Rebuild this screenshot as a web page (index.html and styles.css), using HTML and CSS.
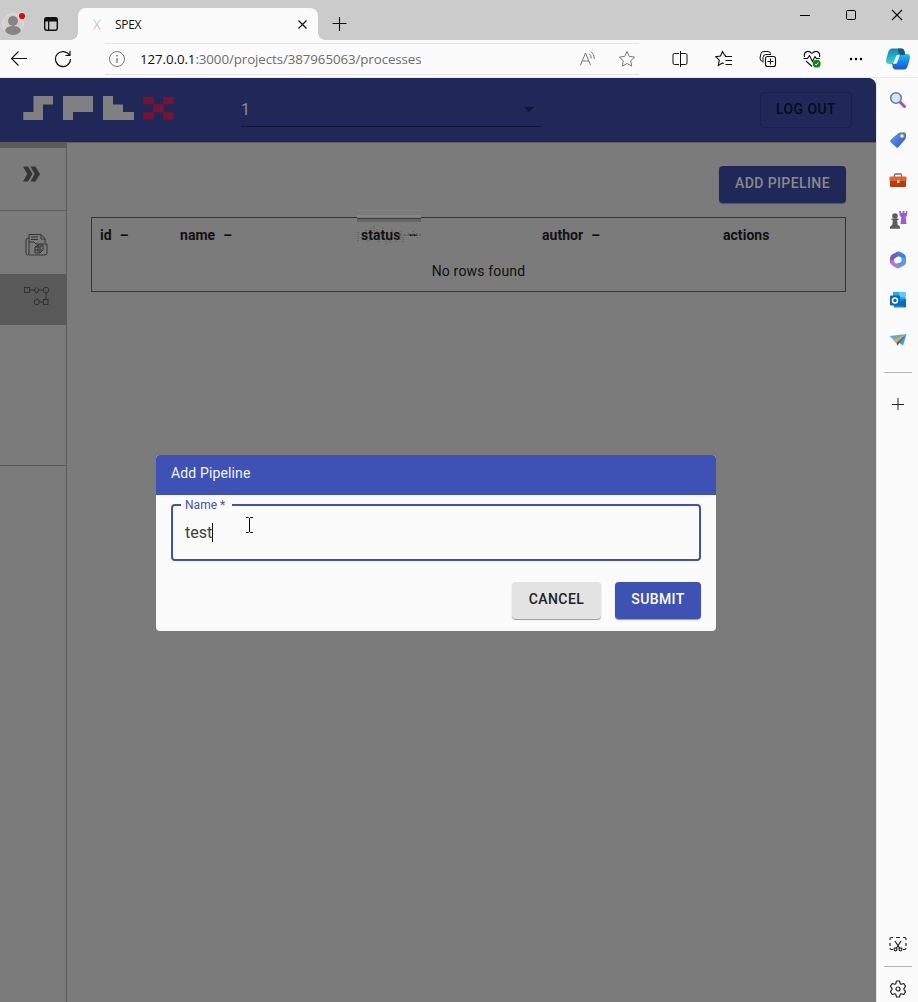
FILE: index.html
```html
<!DOCTYPE html>
<html lang="en">
<head>
<meta charset="utf-8">
<title>SPEX</title>
<link rel="stylesheet" href="styles.css">
</head>
<body>
<div class="window">
  <div class="tabstrip">
    <svg class="avatar" width="26" height="26" viewBox="0 0 26 26"><circle cx="12" cy="15" r="10.5" fill="#d3d0cc" stroke="#e8e4de" stroke-width=".8"/><circle cx="12" cy="12" r="5" fill="#858585"/><path d="M4 22q1-5 8-5t8 5q-3 4-8 4t-8-4z" fill="#858585"/><circle cx="21" cy="7" r="4" fill="#ddd"/><circle cx="21" cy="7" r="3.1" fill="#e60505"/></svg>
    <svg class="workspaces" width="16" height="16" viewBox="0 0 16 16"><rect x="1.7" y="1.7" width="12.6" height="12.6" rx="2.2" fill="none" stroke="#111" stroke-width="1.4"/><path d="M1.5 5.5V3.5q0-2 2-2h9q2 0 2 2v2zM5 5h1.3v9H5z" fill="#111"/></svg>
    <div class="tab">
      <svg class="favicon" width="8" height="11" viewBox="0 0 8 11"><path d="M.7.5 4 5.5 7.3.5" fill="none" stroke="#b9d3df" stroke-width="1.1"/><path d="M.7 10.5 4 5.5l3.3 5" fill="none" stroke="#efb7ad" stroke-width="1.1"/></svg>
      <span class="tab-title">SPEX</span>
      <svg width="9" height="9" viewBox="0 0 9 9"><path d="m.5.5 8 8m0-8-8 8" stroke="#111" stroke-width="1.2"/></svg>
    </div>
    <svg class="newtab" width="15" height="15" viewBox="0 0 15 15"><path d="M.5 7.5h14M7.500 1v14" stroke="#111" stroke-width="1.1"/></svg>
    <div class="controls">
      <svg width="12" height="12" viewBox="0 0 12 12"><path d="M1 6.5h10" stroke="#000"/></svg>
      <svg width="12" height="12" viewBox="0 0 12 12"><rect x="1.5" y="1.5" width="9" height="9" rx="1.3" fill="none" stroke="#000"/></svg>
      <svg width="12" height="12" viewBox="0 0 12 12"><path d="m1 1 10 10m0-10L1 11" stroke="#000" stroke-width="1.1"/></svg>
    </div>
  </div>

  <div class="toolbar">
    <div class="tool back"><svg width="18" height="16" viewBox="0 0 18 16"><path d="M17 7.500H1.500M8.500.500l-7 7 7 7" fill="none" stroke="#111" stroke-width="1.1"/></svg></div>
    <div class="tool refresh"><svg width="18" height="18" viewBox="0 0 18 18"><path d="M15.5 5.3A7.5 7.5 0 1 0 16.5 9M16 1v4.5h-4.6" fill="none" stroke="#111" stroke-width="1.2"/></svg></div>
    <div class="address">
      <svg width="24" height="18" viewBox="0 0 24 18"><circle cx="12" cy="9" r="7.5" fill="none" stroke="#777"/><path d="M12 8v5M12 5v1.4" stroke="#777" stroke-width="1.3"/></svg>
      <span class="url"><b>127.0.0.1</b>:3000/projects/387965063/processes</span>
      <svg class="read" width="24" height="20" viewBox="0 0 24 20"><path d="M4.500 16 9.500 4l5 12M6.200 12h6.600M13 4.500q2.500 1.800 2.200 5M14.800 2.500q4 2.800 3.500 7.500" fill="none" stroke="#777"/></svg>
      <svg class="star" width="24" height="20" viewBox="0 0 24 20"><path d="m12 2.500 2.300 4.900 5.300.7-3.900 3.700 1 5.300-4.700-2.600-4.700 2.600 1-5.300-3.900-3.700 5.300-.7z" fill="none" stroke="#777" stroke-linejoin="round"/></svg>
    </div>
    <div class="tools">
      <div class="tool"><svg width="16" height="16" viewBox="0 0 16 16"><path d="M7 2.500H2.500q-1.500 0-1.500 1.500v8q0 1.500 1.500 1.500H7M9 2.500h4.500q1.500 0 1.500 1.500v8q0 1.500-1.500 1.500H9M8.500 0v16" fill="none" stroke="#111"/></svg></div>
      <div class="tool"><svg width="18" height="18" viewBox="0 0 18 18"><path d="M11 5.500 9.500 5 7.500 1.500 5.500 6l-4.800.7 3.600 3.500-1 5.200L7.500 13l1.200.7M10 6.500h7M10.500 10.500H17M10.500 14.500H17" fill="none" stroke="#111" stroke-width="1.100"/></svg></div>
      <div class="tool"><svg width="18" height="18" viewBox="0 0 18 18"><path d="M3.500 11.500Q1 11 1 8L2 3.500Q2.500 1.500 5 1.500h4q2 0 2.700 2M4 12.500V7.500q0-3 3-3h5" fill="none" stroke="#111"/><rect x="6.500" y="6.500" width="10" height="10" rx="2" fill="#fbfbfb" stroke="#111" stroke-width="1.100"/><path d="M8.500 11.500h6M11.500 8.500v6" stroke="#111" stroke-width="1.100"/></svg></div>
      <div class="tool"><svg width="18" height="18" viewBox="0 0 18 18"><path d="M1.500 7Q.5 2.500 4 1.500q2.700-.5 5 2 2.300-2.500 5-2 3.500 1 2.500 5.500M.5 8.500h4l2-3 3 6 2.500-5 1.300 2h3.500M3 11l6 5.500" fill="none" stroke="#111" stroke-width="1.100"/><circle cx="13.700" cy="13.700" r="3.900" fill="#118316"/><path d="m12 14 1.200 1 2.300-2.500" fill="none" stroke="#fff" stroke-width=".9"/></svg></div>
      <div class="tool"><svg width="14" height="4" viewBox="0 0 14 4"><circle cx="2" cy="2" r="1.250"/><circle cx="7" cy="2" r="1.250"/><circle cx="12" cy="2" r="1.250"/></svg></div>
      <div class="tool"><svg width="24" height="24" viewBox="0 0 24 24"><defs><linearGradient id="ca" x1="0" y1="0" x2="0" y2="1"><stop stop-color="#1a83b0"/><stop offset=".5" stop-color="#1badd0"/><stop offset="1" stop-color="#55d69b"/></linearGradient><linearGradient id="cb" x1="0" y1="1" x2="0" y2="0"><stop stop-color="#1b51d9"/><stop offset=".5" stop-color="#1b84e7"/><stop offset="1" stop-color="#1cc4f4"/></linearGradient></defs><path d="M6 1.500h9q3 0 3.500 3L19 8h-4q-2 0-2.600 2l-1.600 5q-.8 2-2.800 2H3q-3 0-3-3 .3-3 2-8 1.200-4.500 4-4.500z" fill="url(#ca)"/><path d="M18 22.500H10q-3 0-3.500-3L6 16h3q2 0 2.700-2l1.500-5q.8-2 2.800-2h5q3 0 3 3-.3 3-2 8-1.200 4.500-4 4.500z" fill="url(#cb)"/><path d="M12 1.500h3q3 0 3.500 3L19 8h-4l-2 .8z" fill="#165b83"/><path d="m14 7.200-3.300 9.300-3.700.500 3.300-8.500z" fill="#e9fbff"/></svg></div>
    </div>
  </div>

  <div class="body">
    <div class="page">
      <header class="appbar">
        <svg class="logo" width="152" height="24" viewBox="0 0 152 24"><g fill="#808080"><path d="M10.500 0H30v8.500H20V24H.3v-8h10.200zM40 0h30v16H50v8H40zM80 0h10v8.500h10V16h11v8H80z"/></g><path d="M120.300.7h10.400v7.500h9.600V.7h10.400v7.500h-10v8h10v7.300h-10.400v-7.300h-9.600v7.300h-10.400v-7.300h10v-8h-10z" fill="#7b1232"/></svg>
        <div class="select"><span>1</span><svg width="10" height="5" viewBox="0 0 10 5"><path d="M0 0h10L5 5z" fill="#10163a"/></svg></div>
        <button class="btn logout">LOG OUT</button>
      </header>
      <div class="columns">
        <nav class="nav">
          <div class="nav-item toggle"><svg width="19" height="16" viewBox="0 0 19 16"><path d="M1 .500h5l4.500 7.500L6 15.500H1L5.200 8zM8.500.500h5L18 8l-4.500 7.500h-5L12.700 8z" fill="#353535"/></svg></div>
          <div class="nav-item files"><svg width="24" height="24" viewBox="0 0 24 24" fill="none" stroke="#353535"><path d="M4 9V1.500h12l4 4V10M16 1.500V6h4M6 4h7M6 6.500h7M4 9h5l2 2h11v9q0 2-2 2H4M4 9v11q0 2-1.500 2T1 20V7q0-2 3-2"/><path d="m10 14 3-2h5v5l-3 3h-5zM10 14h5v6m0-6 3-2M10 17h7M13 12v8"/></svg></div>
          <div class="nav-item flow"><svg width="26" height="20" viewBox="0 0 26 20" fill="none" stroke="#303030"><rect x=".5" y="1.500" width="5" height="5"/><path d="M6 4h5M11.500 1.500q-2 2.500 0 5h2q2-2.500 0-5M15 4h4M22 7v6"/><circle cx="22" cy="4" r="2.800"/><circle cx="12.700" cy="16" r="2.700"/><rect x="19.500" y="13.500" width="4.500" height="5"/><path d="M15.500 16h4"/></svg></div>
          <div class="nav-rest"></div>
        </nav>
        <main class="main">
          <button class="btn add">ADD PIPELINE</button>
          <div class="table">
            <div class="thead">
              <span>id<i>–</i></span><span>name<i>–</i></span><span class="status">status<i>–</i><svg class="speckle" width="66" height="20" viewBox="0 0 66 20"><path d="M1 7v9M9 5v2M11 13v4M14 3v3M17 1v5M20 4v3M22 14v4M26 3v3M29 14v5M33 15v3M35 4v3M39 14v4M43 6v10M46 12v5M52 8v3M56 6v6M60 8v5" stroke="#555648" stroke-dasharray="1 1"/><path d="M42 10h22" stroke="#5d5346" stroke-dasharray="3 1"/></svg></span><span>author<i>–</i></span><span>actions</span>
            </div>
            <div class="empty">No rows found</div>
          </div>
        </main>
      </div>
      <section class="dialog">
        <h2>Add Pipeline</h2>
        <div class="dialog-body">
          <fieldset class="field">
            <legend>Name *</legend>
            <span class="value">test</span>
          </fieldset>
          <div class="actions"><button class="btn cancel">CANCEL</button><button class="btn submit">SUBMIT</button></div>
        </div>
      </section>
      <svg class="cursor" width="9" height="16" viewBox="0 0 9 16"><path d="M1 .5h2.500l1 1 1-1H8M4.500 1v14M1 15.500h2.500l1-1 1 1H8" fill="none" stroke="#000"/></svg>
    </div>

    <aside class="sidebar">
      <div class="slot"><svg width="18" height="18" viewBox="0 0 18 18"><path d="m11 11 4.500 4.500" stroke="#a64bd8" stroke-width="3" stroke-linecap="round"/><circle cx="7" cy="7" r="5.300" fill="#c9e9fb" stroke="#747b83" stroke-width="1.600"/></svg></div>
      <div class="slot"><svg width="18" height="18" viewBox="0 0 18 18"><defs><linearGradient id="tg" x1="0" y1="0" x2="1" y2="1"><stop stop-color="#5ba5f6"/><stop offset="1" stop-color="#2f50d3"/></linearGradient></defs><path d="m1.500 9 8-7q1-.7 5.500-.7 2 0 2 2 0 4-.7 5l-7 8q-1 1-2 0L1.500 11q-1-1 0-2z" fill="url(#tg)"/><circle cx="13" cy="5" r="1.700" fill="#fff2bd" stroke="#e0b33a"/></svg></div>
      <div class="slot toolbox"><svg width="18" height="18" viewBox="0 0 18 18"><path d="M5.500 5V3q0-1 1-1h5q1 0 1 1v2" fill="none" stroke="#6f6f72" stroke-width="1.300"/><path d="M1.500 4.500h15q1 0 1 1V9H.5V5.500q0-1 1-1z" fill="#df642d"/><path d="M1 9h16v5q0 1-1 1H2q-1 0-1-1z" fill="#b83b12"/><rect x="8" y="8" width="2.500" height="3" fill="#f2c49c"/></svg></div>
      <div class="slot"><svg width="20" height="20" viewBox="0 0 20 20"><path d="M11 1h2v2h1.500V1h2v2H18V1h1.500l-.8 5-1 1 .8 7h-6l.8-7-1.500-1z" fill="#a356dc"/><circle cx="7" cy="6" r="2.800" fill="#5c5c5e"/><path d="M3.500 8.500h7v1.800H9l.8 4.700 2.200 1.500v2.300H2v-2.300L4.200 15l.8-4.700H3.500z" fill="#5c5c5e"/></svg></div>
      <div class="slot"><svg width="18" height="18" viewBox="0 0 18 18"><path d="M9 .5 3 3.500Q1 5 1 7v5l4 1V8l8-5z" fill="#7756c5"/><path d="M9 .5q2-.5 6 2.500 2 1.500 2 4v3l-4 1V7L7.500 4z" fill="#3d83dc"/><path d="M17 7v4q0 2-2 3.500l-6 3-5-3 8.500-4V6z" fill="#569ae2"/><path d="M1 10q0 3 3 5l5 2.500 3-3-6-2.500-2-4z" fill="#ad79d8"/><circle cx="9" cy="9" r="3" fill="#fff"/></svg></div>
      <div class="slot"><svg width="18" height="18" viewBox="0 0 18 18"><path d="M4 1h12.500v8H4z" fill="#29a8ea"/><path d="M10 1h6.500v5H10z" fill="#55cdf5"/><path d="M4 8h13v7q0 1.500-1.500 1.500H5z" fill="#1587d9"/><path d="m17 8-8 5 7 3.500q1 0 1-1.500z" fill="#1269b1"/><rect x="1" y="4.500" width="10" height="10" rx="1" fill="#0867b9"/><circle cx="6" cy="9.500" r="2.500" fill="none" stroke="#fff" stroke-width="1.500"/></svg></div>
      <div class="slot"><svg width="18" height="18" viewBox="0 0 18 18"><path d="m.5 5 17-2L6.500 10.500z" fill="#48b2ef"/><path d="M17.500 3 14 14.500 9 11z" fill="#35a0e8"/><path d="M4 9 17.500 3 7.500 12.500z" fill="#f3a329"/><path d="M7.500 12 17.500 3 9.500 13l-1 2z" fill="#1a67b0"/></svg></div>
      <hr class="rule">
      <svg class="plus" width="12" height="12" viewBox="0 0 12 12"><path d="M0 6.500h12M6 0v12" stroke="#222"/></svg>
      <div class="spacer"></div>
      <svg width="18" height="16" viewBox="0 0 18 16" fill="none" stroke="#222" stroke-width="1.200"><path d="M1 4V3q0-1.500 1.500-1.500H4M7 1.500h4M14 1.500h1.500Q17 1.500 17 3v1M17 7v3M1 7v3M1 12q0 1.500 1.500 1.500H4M17 12q0 1.500-1.500 1.500H14M6 5l4.500 7M12 5l-4.500 7"/><circle cx="6.500" cy="13.300" r="1.500"/><circle cx="11.500" cy="13.300" r="1.500"/></svg>
      <hr class="rule low">
      <svg class="gear" width="18" height="18" viewBox="0 0 18 18" fill="none" stroke="#222" stroke-width="1.200"><path d="M7.500 1h3l.700 2.700 1 .600 2.600-.800 1.700 2.800L14.700 9l1.800 2.700-1.700 2.800-2.600-.800-1 .600-.700 2.700h-3l-.700-2.700-1-.600-2.600.800-1.700-2.800L3.300 9 1.500 6.300l1.700-2.800 2.600.800 1-.600z" stroke-linejoin="round"/><circle cx="9" cy="9" r="2"/></svg>
    </aside>
  </div>
</div>
</body>
</html>
```
FILE: styles.css
```css
* { box-sizing: border-box; }
body { margin: 0; font-family: Roboto, "Liberation Sans", sans-serif; background: #fbfbfb; }
svg { display: block; flex: none; }
button { border: 0; font-family: inherit; }
.window { width: 918px; height: 1002px; display: flex; flex-direction: column; overflow: hidden; }

.tabstrip { height: 40px; flex: none; display: flex; background: #cbcbcb; align-items: flex-start; }
.avatar { margin: 9px 0 0 1px; }
.workspaces { margin: 16px 0 0 16px; }
.tab { position: relative; width: 240px; height: 32px; margin: 8px 0 0 19px; padding: 0 11px 0 15px; display: flex; align-items: center; background: #fbfbfb; border-radius: 8px 8px 0 0; }
.tab::before, .tab::after { content: ""; position: absolute; bottom: 0; width: 7px; height: 7px; }
.tab::before { left: -7px; background: radial-gradient(circle at 0 0, #cbcbcb 6.5px, #fbfbfb 7px); }
.tab::after { right: -7px; background: radial-gradient(circle at 100% 0, #cbcbcb 6.5px, #fbfbfb 7px); }
.tab-title { flex: 1; margin-left: 14px; font: 12px "Open Sans", sans-serif; letter-spacing: -.3px; color: #111; }
.newtab { margin: 16px 0 0 14px; }
.controls { margin: 9px 15px 0 auto; display: flex; gap: 34px; }

.toolbar { height: 38px; flex: none; display: flex; align-items: center; background: #fbfbfb; border-bottom: 1px solid #e9eaec; }
.tool { width: 44px; display: flex; justify-content: center; }
.tools .tool:last-child { width: 39px; }
.tool.back { width: 38px; }
.tool.refresh { width: 50px; }
.address { flex: none; width: 534px; height: 32px; margin-left: 17px; display: flex; align-items: center; border-top: 1px solid #e5e5e5; border-bottom: 1px solid #e5e5e5; }
.url { flex: 1; margin-left: 11px; font: 13.35px "Open Sans", sans-serif; letter-spacing: -.1px; color: #6d6d6d; white-space: nowrap; }
.url b { font-weight: 400; color: #111; }
.read { margin-right: 15px; }
.tools { flex: none; margin-left: 19px; display: flex; align-items: center; }

.body { flex: 1; display: flex; min-height: 0; }
.page { position: relative; width: 876px; display: flex; flex-direction: column; background: #7b7b7b; border-top-right-radius: 8px; overflow: hidden; }
.appbar { height: 64px; flex: none; display: flex; align-items: center; background: #1f2859; padding: 0 24px 0 23px; }
.logo { margin-top: -4px; }
.select { width: 300px; height: 33px; margin: 0 0 0 66px; padding: 0 7px 0 0; display: flex; align-items: center; justify-content: space-between; border-bottom: 1px solid #0e1537; color: #8e8e8e; font-size: 16px; }
.btn { display: flex; align-items: center; justify-content: center; padding: 0 0 4px; border-radius: 4px; font-weight: 500; font-size: 14px; letter-spacing: .4px; white-space: nowrap; }
.logout { width: 92px; height: 36px; margin-left: auto; padding-bottom: 2px; background: none; border: 1px solid #1a2149; color: #090b17; }
.columns { flex: 1; display: flex; border-top: 1px solid #5c5c5c; }
.nav { width: 67px; display: flex; flex-direction: column; border-right: 1px solid #5b5b5b; border-top: 5px solid #5b5b5b; }
.nav-item { display: flex; justify-content: center; align-items: center; }
.toggle { height: 63px; border-bottom: 1px solid #5b5b5b; padding: 0 4px 10px 0; }
.files { height: 63px; padding: 4px 0 0 8px; }
.flow { height: 51px; padding: 0 0 7px 8px; background: #595959; }
.nav-rest { height: 141px; border-bottom: 1px solid #5b5b5b; }
.main { flex: 1; padding: 23px 30px 0 24px; display: flex; flex-direction: column; }
.add { align-self: flex-end; width: 127px; height: 37px; background: #1f2859; color: #8a8a8a; box-shadow: 0 1px 1px #555; }
.table { margin-top: 14px; height: 75px; border: 1px solid #353535; color: #111; font-size: 14px; }
.thead { height: 35px; padding-bottom: 2px; display: grid; grid-template-columns: 80px 181px 181px 181px 1fr; align-items: center; font-weight: 700; letter-spacing: .04px; }
.thead span { position: relative; padding-left: 8px; }
.thead i { font-style: normal; margin-left: 8px; }
.status::before { content: ""; position: absolute; left: 4px; top: -17px; width: 64px; height: 11px; border-top: 1px solid #858585; background: linear-gradient(#7b7b7b 4px, #858585 4px 6px, #7b7b7b 6px 7px, #3f3f3f 7px 8px, #656565 8px); }
.speckle { position: absolute; left: 4px; top: -2px; }
.empty { height: 37px; line-height: 37px; padding-left: 20px; text-align: center; letter-spacing: .17px; }

.dialog { position: absolute; left: 156px; top: 377px; width: 560px; height: 176px; background: #fbfbfb; border-radius: 4px; overflow: hidden; }
.dialog h2 { height: 40px; margin: 0; padding: 0 15px 4px; display: flex; align-items: center; font-size: 14px; font-weight: 400; letter-spacing: .13px; color: #f5f5ff; background: #3e51b5; }
.dialog-body { padding: 3px 15px 0; }
.field { height: 63px; margin: 0; padding: 0 12px; border: 2px solid #3e51b5; border-radius: 4px; min-width: 0; }
.field legend { height: 14px; margin-left: -4px; padding: 0 7px 0 4px; font-size: 12px; line-height: 14px; letter-spacing: .02px; color: #3e51b5; }
.value { display: inline-block; height: 19px; line-height: 19px; margin-top: 11px; border-right: 1px solid #111; font-size: 16px; color: #3b3b3b; }
.actions { display: flex; justify-content: flex-end; gap: 14px; margin-top: 21px; }
.cancel { width: 89px; height: 37px; background: #e3e3e3; color: #222; box-shadow: 0 1px 1px #999; }
.submit { width: 86px; height: 37px; background: #3e51b5; color: #fff; box-shadow: 0 1px 1px #999; }
.cursor { position: absolute; left: 245px; top: 439px; }

.sidebar { width: 42px; display: flex; flex-direction: column; align-items: center; border-left: 1px solid #e6e6e6; padding: 2px 0 4px; background: #fbfbfb; }
.slot { height: 40px; display: flex; align-items: center; }
.toolbox { padding-top: 2px; }
.rule { width: 28px; height: 1px; margin: 12px 0 0; border: 0; background: #b4b4b4; flex: none; }
.plus { margin-top: 25px; }
.spacer { flex: 1; }
.low { margin: 14px 0 13px; }
```
